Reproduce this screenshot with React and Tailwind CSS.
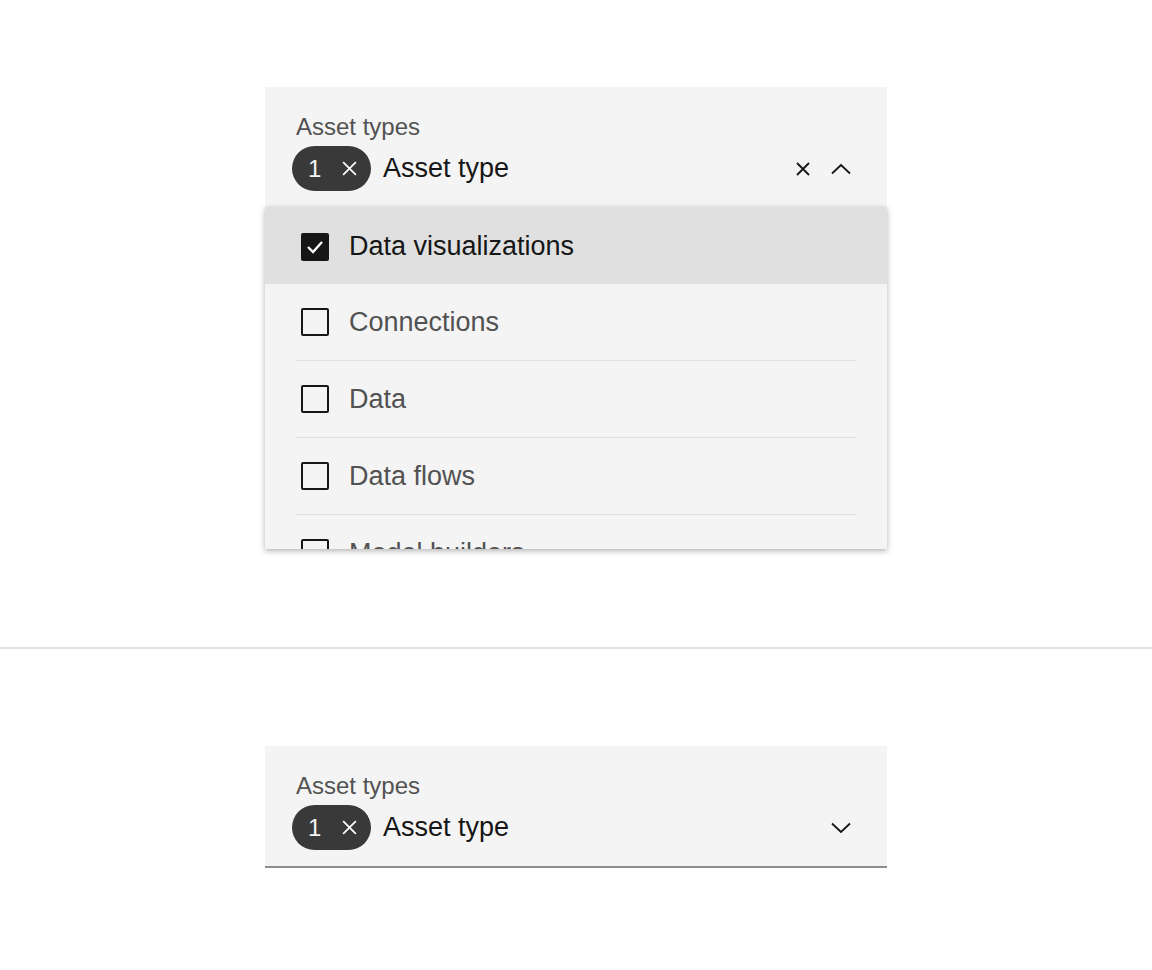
import React from 'react';

const font = { fontFamily: '"Liberation Sans", Arial, sans-serif' };

const CloseIcon = ({ className = '', size = 16, stroke = '#161616', width = 1.8 }) => (
  <svg width={size} height={size} viewBox="0 0 16 16" className={className}>
    <path d="M2 2 L14 14 M14 2 L2 14" stroke={stroke} strokeWidth={width} fill="none" />
  </svg>
);

const Chevron = ({ up }) => (
  <svg width="20" height="12" viewBox="0 0 20 12">
    <path
      d={up ? 'M1 10.5 L10 2 L19 10.5' : 'M1 1.5 L10 10 L19 1.5'}
      stroke="#161616"
      strokeWidth="1.8"
      fill="none"
    />
  </svg>
);

const Tag = () => (
  <div className="flex items-center h-[45px] w-[79px] rounded-full bg-[#393939] pl-[16px] pr-[13px] justify-between">
    <span className="text-[24px] leading-none text-[#f4f4f4]">1</span>
    <CloseIcon size={17} stroke="#ffffff" width={1.6} />
  </div>
);

const Field = ({ open }) => (
  <div
    className={`h-[120px] bg-[#f4f4f4] pl-[27px] pr-[36px] pt-[26px] flex flex-col ${
      open ? '' : 'border-b-2 border-[#8d8d8d] h-[122px]'
    }`}
  >
    <div className="text-[24px] leading-[28px] text-[#525252] pl-[4px]">Asset types</div>
    <div className="flex items-center mt-[5px]">
      <Tag />
      <span className="ml-[12px] text-[27px] leading-none text-[#161616]">Asset type</span>
      <div className="ml-auto flex items-center gap-[20px]">
        {open && <CloseIcon size={16} />}
        <Chevron up={open} />
      </div>
    </div>
  </div>
);

const Checkbox = ({ checked }) =>
  checked ? (
    <div className="w-[28px] h-[28px] rounded-[2px] bg-[#161616] flex items-center justify-center">
      <svg width="18" height="14" viewBox="0 0 18 14">
        <path d="M2 7 L7 12 L16 2" stroke="#ffffff" strokeWidth="2.4" fill="none" />
      </svg>
    </div>
  ) : (
    <div className="w-[28px] h-[28px] rounded-[2px] border-2 border-[#161616]" />
  );

const items = [
  { label: 'Data visualizations', checked: true },
  { label: 'Connections' },
  { label: 'Data' },
  { label: 'Data flows' },
  { label: 'Model builders' },
];

const Menu = () => (
  <div className="h-[342px] bg-[#f4f4f4] overflow-hidden shadow-[0_2px_6px_rgba(0,0,0,0.3)]">
    {items.map((item, i) => (
      <div key={i} className={item.checked ? 'bg-[#e0e0e0]' : ''}>
        <div className={`mx-[31px] ${i > 1 ? 'border-t border-[#e0e0e0]' : ''}`}>
          <div
            className={`flex items-center ${i === 0 ? 'h-[77px] pt-[2px]' : 'h-[76px]'} pl-[5px]`}
          >
            <Checkbox checked={item.checked} />
            <span
              className={`ml-[20px] text-[27px] leading-none ${
                item.checked ? 'text-[#161616]' : 'text-[#525252]'
              }`}
            >
              {item.label}
            </span>
          </div>
        </div>
      </div>
    ))}
  </div>
);

export default function App() {
  return (
    <div className="w-[1152px] h-[970px] bg-white" style={font}>
      <div className="pt-[87px] flex justify-center">
        <div className="w-[622px]">
          <Field open />
          <Menu />
        </div>
      </div>
      <div className="mt-[98px] h-[2px] bg-[#e0e0e0]" />
      <div className="pt-[97px] flex justify-center">
        <div className="w-[622px]">
          <Field />
        </div>
      </div>
    </div>
  );
}
